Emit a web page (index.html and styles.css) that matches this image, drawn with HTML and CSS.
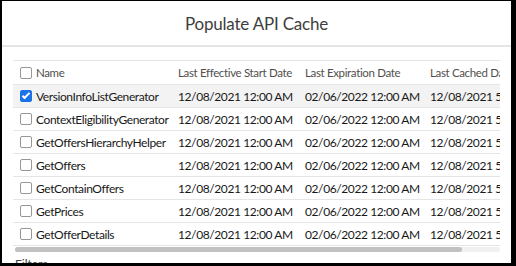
FILE: index.html
```html
<!DOCTYPE html>
<html lang="en">
<head>
  <meta charset="UTF-8">
  <meta name="viewport" content="width=device-width, initial-scale=1.0">
  <title>Populate API Cache</title>
  <link rel="stylesheet" href="styles.css">
</head>
<body>
  <div class="modal">
    <div class="modal-header">
      <h1>Populate API Cache</h1>
    </div>

    <div class="modal-body">
      <div class="table-wrap">
        <div class="table">
          <div class="row head">
            <div class="cell name"><span class="box"></span>Name</div>
            <div class="cell">Last Effective Start Date</div>
            <div class="cell">Last Expiration Date</div>
            <div class="cell">Last Cached Date</div>
          </div>
          <div class="row selected">
            <div class="cell name"><span class="box checked"></span>VersionInfoListGenerator</div>
            <div class="cell">12/08/2021 12:00 AM</div>
            <div class="cell">02/06/2022 12:00 AM</div>
            <div class="cell">12/08/2021 5:00 PM</div>
          </div>
          <div class="row">
            <div class="cell name"><span class="box"></span>ContextEligibilityGenerator</div>
            <div class="cell">12/08/2021 12:00 AM</div>
            <div class="cell">02/06/2022 12:00 AM</div>
            <div class="cell">12/08/2021 5:00 PM</div>
          </div>
          <div class="row">
            <div class="cell name"><span class="box"></span>GetOffersHierarchyHelper</div>
            <div class="cell">12/08/2021 12:00 AM</div>
            <div class="cell">02/06/2022 12:00 AM</div>
            <div class="cell">12/08/2021 5:00 PM</div>
          </div>
          <div class="row">
            <div class="cell name"><span class="box"></span>GetOffers</div>
            <div class="cell">12/08/2021 12:00 AM</div>
            <div class="cell">02/06/2022 12:00 AM</div>
            <div class="cell">12/08/2021 5:00 PM</div>
          </div>
          <div class="row">
            <div class="cell name"><span class="box"></span>GetContainOffers</div>
            <div class="cell">12/08/2021 12:00 AM</div>
            <div class="cell">02/06/2022 12:00 AM</div>
            <div class="cell">12/08/2021 5:00 PM</div>
          </div>
          <div class="row">
            <div class="cell name"><span class="box"></span>GetPrices</div>
            <div class="cell">12/08/2021 12:00 AM</div>
            <div class="cell">02/06/2022 12:00 AM</div>
            <div class="cell">12/08/2021 5:00 PM</div>
          </div>
          <div class="row">
            <div class="cell name"><span class="box"></span>GetOfferDetails</div>
            <div class="cell">12/08/2021 12:00 AM</div>
            <div class="cell">02/06/2022 12:00 AM</div>
            <div class="cell">12/08/2021 5:00 PM</div>
          </div>
        </div>
      </div>
      <div class="scrollbar"><div class="thumb"></div></div>
      <div class="filters">Filters</div>
    </div>
  </div>
</body>
</html>
```

FILE: styles.css
```css
html, body {
  margin: 0;
  height: 266px;
  overflow: hidden;
}
body {
  background: #000;
  padding: 1px 5px 0 2px;
  box-sizing: border-box;
  font-family: Lato, "Open Sans", sans-serif;
  color: #3e3e3c;
}
.modal {
  background: #fff;
  height: 262px;
  overflow: hidden;
}
.modal-header {
  height: 44px;
  border-bottom: 2px solid #e5e5e5;
  display: flex;
  align-items: center;
  justify-content: center;
}
.modal-header h1 {
  margin: 0;
  font-size: 17px;
  font-weight: 400;
  letter-spacing: -0.2px;
  color: #3e3e3c;
}
.modal-body {
  padding: 13px 11px 0 11px;
}
.table-wrap {
  overflow: hidden;
}
.table {
  width: 620px;
}
.row {
  display: grid;
  grid-template-columns: 165px 127px 125px 1fr;
  height: 22px;
  align-items: center;
  border-bottom: 1px solid #e5e5e5;
  font-size: 12px;
  letter-spacing: -0.4px;
  color: #181818;
}
.row.head {
  height: 23px;
  border-top: 1px solid #e5e5e5;
  color: #514f4d;
  font-size: 11.5px;
  letter-spacing: -0.35px;
}
.row.selected {
  background: #f3f3f3;
}
.cell {
  white-space: nowrap;
}
.cell.name {
  display: flex;
  align-items: center;
  padding-left: 7px;
}
.box {
  flex-shrink: 0;
  width: 10px;
  height: 10px;
  border: 1px solid #979797;
  border-radius: 2px;
  margin-right: 4px;
  background: #fff;
  position: relative;
}
.box.checked {
  background: #1a73e8;
  border-color: #1a73e8;
}
.box.checked::after {
  content: "";
  position: absolute;
  left: 3px;
  top: 0px;
  width: 2px;
  height: 6px;
  border: solid #fff;
  border-width: 0 2px 2px 0;
  transform: rotate(45deg);
}
.scrollbar {
  margin: 1px 0 0 2px;
  height: 5px;
  background: #f0f0f0;
  border-radius: 3px;
}
.scrollbar .thumb {
  width: 447px;
  height: 5px;
  background: #c1c1c1;
  border-radius: 3px;
}
.filters {
  margin-top: 4px;
  padding-left: 2px;
  font-size: 12px;
  color: #3e3e3c;
}
```
